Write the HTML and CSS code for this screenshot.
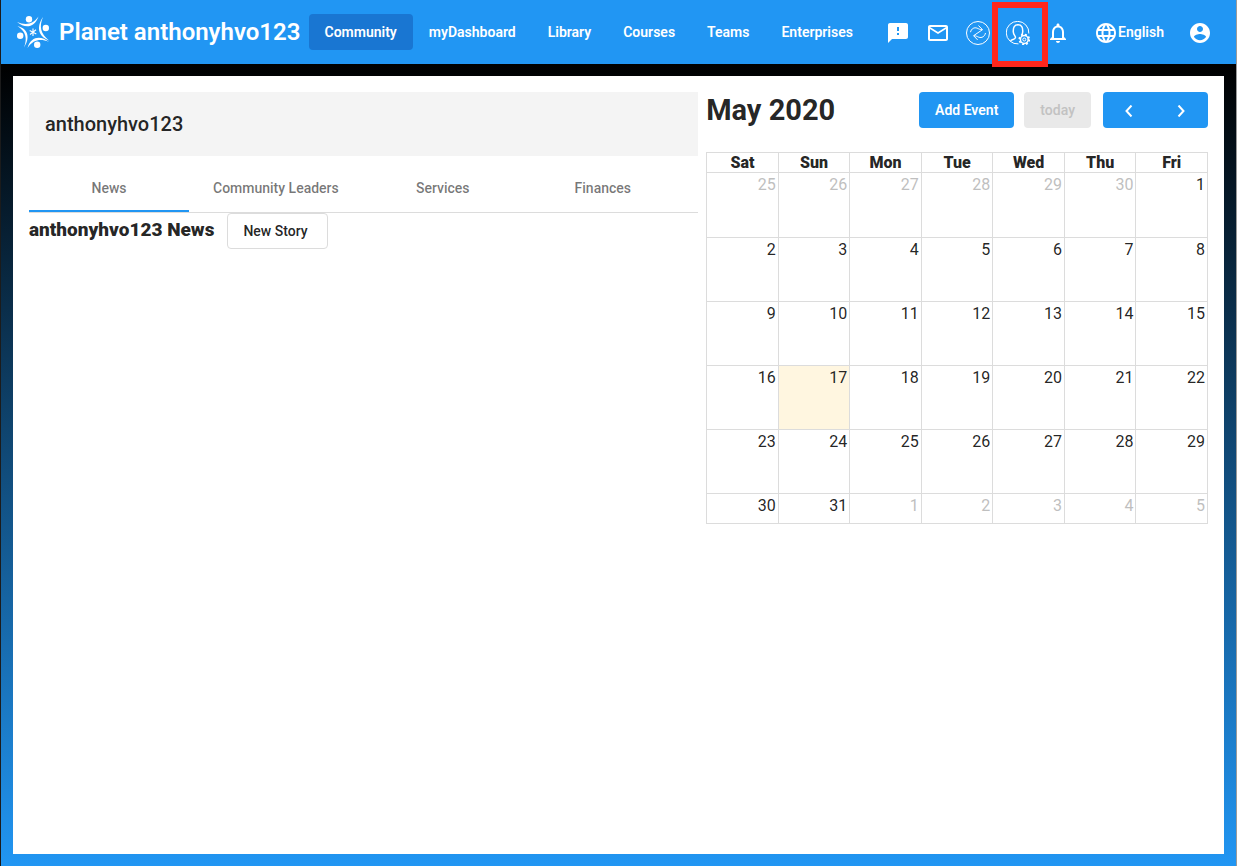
FILE: index.html
```html
<!DOCTYPE html>
<html lang="en">
<head>
<meta charset="utf-8">
<title>Planet anthonyhvo123</title>
<link rel="stylesheet" href="styles.css">
</head>
<body>
<div class="app">
  <header class="toolbar">
    <svg class="logo" viewBox="0 0 32 32" aria-hidden="true">
      <g fill="#fff">
        <circle cx="12" cy="3.300" r="3.200"/><circle cx="28.800" cy="12" r="3.200"/>
        <circle cx="20.200" cy="28.700" r="3.200"/><circle cx="3.200" cy="19.800" r="3.200"/>
        <path d="M0 6C8 9.300 15.500 9 21.500 0.500C17 12.500 8 12.500 0 6Z"/>
        <path d="M26 1C22 10.500 23.500 17.500 32 24.500C20.500 20 19.500 10.500 26 1Z"/>
        <path d="M32 26C23.500 22.500 16.500 23.500 10.500 32C14 20 24 19.500 32 26Z"/>
        <path d="M7 31.500C10.500 22.500 9 15.500 0.500 10C12 13 13 22.500 7 31.500Z"/>
      </g>
      <path d="M16 12.500v7.500M12.700 14.400l6.600 3.700M19 13.800l-6 4.700" stroke="#fff" stroke-width="1.100"/>
    </svg>
    <h1 class="brand">Planet anthonyhvo123</h1>
    <nav class="links">
      <a class="link active" href="#community">Community</a>
      <a class="link" href="#dashboard">myDashboard</a>
      <a class="link" href="#library">Library</a>
      <a class="link" href="#courses">Courses</a>
      <a class="link" href="#teams">Teams</a>
      <a class="link" href="#enterprises">Enterprises</a>
    </nav>
    <div class="actions">
      <button class="icon-btn" aria-label="Feedback"><svg class="icon" viewBox="0 0 24 24"><path d="M20 2H4c-1.100 0-2 .9-2 2v18l4-4h14c1.100 0 2-.9 2-2V4c0-1.100-.9-2-2-2zm-7 12h-2v-2h2v2zm0-4h-2V6h2v4z"/></svg></button>
      <button class="icon-btn" aria-label="Messages"><svg class="icon" viewBox="0 0 24 24"><path d="M22 6c0-1.100-.9-2-2-2H4c-1.100 0-2 .9-2 2v12c0 1.100.9 2 2 2h16c1.100 0 2-.9 2-2V6zm-2 0l-8 5-8-5h16zm0 12H4V8l8 5 8-5v10z"/></svg></button>
      <button class="icon-btn" aria-label="Sync"><svg class="icon line" viewBox="0 0 24 24"><circle cx="12" cy="12" r="11.500"/><path d="M4.500 11.200C5.300 7.500 8.500 6 11.200 7.200c1.600.7 2.800 1.500 5 1.500M12.500 4.500l4 4.200-4.500 3M19.500 12c-.8 3.700-3.800 5.200-6.700 4.200-1.600-.6-2.800-1.500-5-1.500M12 11.700l-4.400 3 4 4.200"/></svg></button>
      <button class="icon-btn marked" aria-label="Manager settings"><svg class="icon line" viewBox="0 0 24 24"><path d="M12.500 22.900A11.300 11.300 0 1 1 22.800 12.500"/><path stroke-width="1.500" d="M4.500 19.800c1.500-1.600 4.800-1.200 5-3.300 0-1.500-2-2.500-2.200-5.500C7 6.300 8.500 3.800 12 3.800s5 2.500 4.700 7.200c-.1 1.300-.5 2.200-1.200 3"/><circle cx="18.300" cy="18.500" r="3.900" stroke-width="1.500"/><circle cx="18.300" cy="18.500" r="1.500"/><circle cx="18.300" cy="18.500" r="5" stroke-width="1.700" stroke-dasharray="1.963"/></svg></button>
      <button class="icon-btn" aria-label="Notifications"><svg class="icon" viewBox="0 0 24 24"><path d="M12 22c1.100 0 2-.9 2-2h-4c0 1.100.9 2 2 2zm6-6v-5c0-3.070-1.630-5.640-4.500-6.320V4c0-.83-.67-1.500-1.500-1.500s-1.500.67-1.500 1.500v.68C7.640 5.360 6 7.920 6 11v5l-2 2v1h16v-1l-2-2zm-2 1H8v-6c0-2.480 1.510-4.500 4-4.500s4 2.020 4 4.500v6z"/></svg></button>
      <button class="link language"><svg class="icon" viewBox="0 0 24 24" aria-hidden="true"><path d="M11.990 2C6.470 2 2 6.480 2 12s4.470 10 9.990 10C17.520 22 22 17.520 22 12S17.520 2 11.990 2zm6.930 6h-2.950a15.650 15.650 0 0 0-1.380-3.560A8.030 8.030 0 0 1 18.920 8zM12 4.040c.83 1.200 1.480 2.530 1.910 3.960h-3.820c.43-1.430 1.080-2.760 1.910-3.960zM4.260 14C4.100 13.360 4 12.690 4 12s.1-1.360.26-2h3.380c-.08.66-.14 1.320-.14 2s.06 1.340.14 2H4.260zm.82 2h2.950c.32 1.250.78 2.450 1.380 3.560A7.987 7.987 0 0 1 5.080 16zm2.950-8H5.080a7.987 7.987 0 0 1 4.330-3.560A15.650 15.650 0 0 0 8.030 8zM12 19.960c-.83-1.200-1.480-2.530-1.910-3.960h3.820c-.43 1.430-1.080 2.760-1.910 3.960zM14.340 14H9.660c-.09-.66-.16-1.320-.16-2s.07-1.350.16-2h4.680c.09.65.16 1.320.16 2s-.07 1.340-.16 2zm.25 5.560c.6-1.110 1.060-2.310 1.380-3.560h2.950a8.030 8.030 0 0 1-4.330 3.560zM16.360 14c.08-.66.14-1.320.14-2s-.06-1.340-.14-2h3.380c.16.640.26 1.310.26 2s-.1 1.360-.26 2h-3.380z"/></svg>English</button>
      <button class="icon-btn" aria-label="Account"><svg class="icon" viewBox="0 0 24 24"><path d="M12 2C6.480 2 2 6.480 2 12s4.480 10 10 10 10-4.480 10-10S17.520 2 12 2zm0 3c1.660 0 3 1.340 3 3s-1.340 3-3 3-3-1.340-3-3 1.340-3 3-3zm0 14.200c-2.500 0-4.710-1.280-6-3.220.03-1.990 4-3.080 6-3.080 1.990 0 5.970 1.090 6 3.080-1.290 1.940-3.500 3.220-6 3.220z"/></svg></button>
    </div>
  </header>

  <div class="backdrop">
    <main class="page">
      <section class="community">
        <h2 class="banner">anthonyhvo123</h2>
        <div class="tabs" role="tablist">
          <button class="tab selected" role="tab" aria-selected="true">News</button>
          <button class="tab" role="tab">Community Leaders</button>
          <button class="tab" role="tab">Services</button>
          <button class="tab" role="tab">Finances</button>
        </div>
        <div class="news" role="tabpanel">
          <h3 class="news-title">anthonyhvo123 News</h3>
          <button class="btn outline">New Story</button>
        </div>
      </section>

      <section class="calendar">
        <div class="cal-head">
          <h2 class="month">May 2020</h2>
          <button class="btn primary">Add Event</button>
          <button class="btn today" disabled>today</button>
          <div class="pager">
            <button class="page-btn" aria-label="Previous month"><svg class="chevron" viewBox="0 0 8 12"><path d="M6.500 0.500L1.500 6l5 5.500"/></svg></button>
            <button class="page-btn" aria-label="Next month"><svg class="chevron" viewBox="0 0 8 12"><path d="M1.500 0.500l5 5.500-5 5.500"/></svg></button>
          </div>
        </div>
        <table class="days">
          <thead><tr><th>Sat</th><th>Sun</th><th>Mon</th><th>Tue</th><th>Wed</th><th>Thu</th><th>Fri</th></tr></thead>
          <tbody>
            <tr class="first"><td class="other">25</td><td class="other">26</td><td class="other">27</td><td class="other">28</td><td class="other">29</td><td class="other">30</td><td>1</td></tr>
            <tr><td>2</td><td>3</td><td>4</td><td>5</td><td>6</td><td>7</td><td>8</td></tr>
            <tr><td>9</td><td>10</td><td>11</td><td>12</td><td>13</td><td>14</td><td>15</td></tr>
            <tr><td>16</td><td class="current">17</td><td>18</td><td>19</td><td>20</td><td>21</td><td>22</td></tr>
            <tr><td>23</td><td>24</td><td>25</td><td>26</td><td>27</td><td>28</td><td>29</td></tr>
            <tr class="short"><td>30</td><td>31</td><td class="other">1</td><td class="other">2</td><td class="other">3</td><td class="other">4</td><td class="other">5</td></tr>
          </tbody>
        </table>
      </section>
    </main>
  </div>
</div>
</body>
</html>
```

FILE: styles.css
```css
* { box-sizing: border-box; }

body {
  margin: 0;
  font-family: Roboto, "Liberation Sans", sans-serif;
  font-size: 16px;
  color: rgba(0, 0, 0, 0.87);
  background: #1b1b1b;
}

h1, h2, h3 { margin: 0; }
button { font: inherit; border: 0; padding: 0; margin: 0; background: none; color: inherit; }

.app {
  min-height: 100vh;
  display: flex;
  flex-direction: column;
  border-left: 1px solid #1b1b1b;
  border-right: 1px solid #9a9a9a;
}

.toolbar {
  height: 64px;
  padding: 0 16px;
  display: flex;
  align-items: center;
  background: #2196f3;
  color: #fff;
}
.logo { width: 32px; height: 32px; flex: none; margin-right: 10px; }
.brand { font-size: 24px; line-height: 34px; font-weight: 600; white-space: nowrap; margin-right: 8px; }
.links { display: flex; }
.link {
  padding: 0 16px;
  border-radius: 4px;
  font-size: 14px;
  line-height: 36px;
  font-weight: 600;
  color: #fff;
  text-decoration: none;
  white-space: nowrap;
}
.link.active { background: #1976d2; }
.actions { display: flex; align-items: center; margin-left: auto; }
.icon-btn { width: 40px; height: 40px; padding-top: 2px; display: grid; place-items: center; position: relative; }
.icon { width: 24px; height: 24px; display: block; fill: currentColor; }
.icon.line { fill: none; stroke: currentColor; stroke-width: 1; }
.language { display: flex; align-items: center; }
.language .icon { margin-top: 2px; }

.marked::after {
  content: "";
  position: absolute;
  inset: -10px -10px -15px -6px;
  border: 6px solid #ff261c;
}

.backdrop {
  flex: 1;
  padding: 12px;
  display: flex;
  background: linear-gradient(#000, #2196f3);
}
.page {
  flex: 1;
  padding: 16px;
  display: grid;
  grid-template-columns: minmax(0, 4fr) minmax(0, 3fr);
  column-gap: 8px;
  align-items: start;
  background: #fff;
}

.banner {
  padding: 16px;
  font-size: 20px;
  line-height: 32px;
  font-weight: 500;
  background: #f4f4f4;
}
.tabs { display: flex; margin-top: 8px; border-bottom: 1px solid #dcdcdc; }
.tab {
  height: 48px;
  min-width: 160px;
  padding: 0 24px;
  font-size: 14px;
  font-weight: 500;
  color: rgba(0, 0, 0, 0.54);
  white-space: nowrap;
}
.tab.selected { box-shadow: inset 0 -2px #2196f3; }
.news { display: flex; align-items: flex-start; gap: 13px; }
.news-title { font-size: 19px; line-height: 34px; font-weight: 900; }

.btn {
  height: 36px;
  padding: 0 16px;
  border-radius: 4px;
  font-size: 14px;
  font-weight: 500;
  white-space: nowrap;
}
.outline { border: 1px solid #dcdcdc; padding: 0 19px 0 15px; }
.primary { background: #2196f3; color: #fff; font-weight: 600; }
.today { background: #e9e9e9; color: #c2c2c2; margin: 0 12px 0 10px; }

.cal-head { display: flex; align-items: center; margin-bottom: 24px; }
.month { flex: 1; font-size: 29px; line-height: 36px; font-weight: 700; }
.pager { display: flex; padding-right: 1px; border-radius: 4px; background: #2196f3; color: #fff; }
.page-btn { height: 36px; width: 52px; padding-top: 2px; display: grid; place-items: center; }
.chevron { width: 8px; height: 12px; fill: none; stroke: currentColor; stroke-width: 2; }

.days { width: 100%; table-layout: fixed; border-collapse: collapse; line-height: 19px; }
.days th, .days td { border: 1px solid #dcdcdc; }
.days th { padding: 0; font-weight: 900; }
.days td { height: 64px; padding: 2px; text-align: right; vertical-align: top; }
.days .first td { height: 65px; }
.days .short td { height: 30px; }
.days .other { color: #bfbfbf; }
.days .current { background: #fff6e0; }
```
